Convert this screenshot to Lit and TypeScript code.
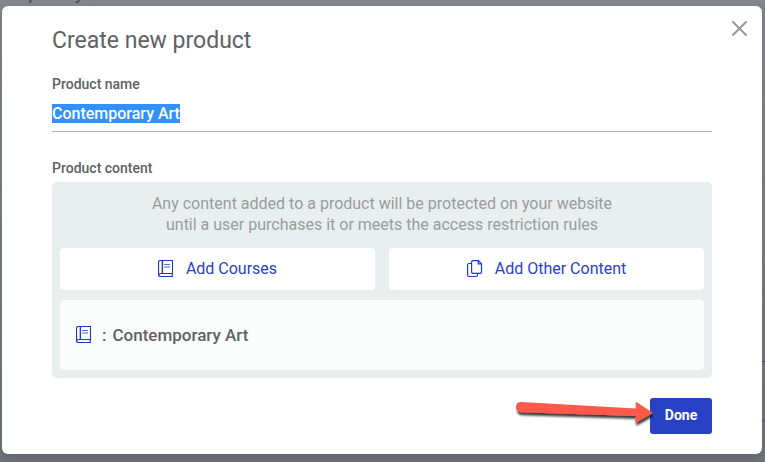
import { LitElement, html, css, svg } from "lit";
import { customElement, state, query } from "lit/decorators.js";

const bookIcon = html`<svg class="icon" width="16" height="18" viewBox="0 0 16 18" aria-hidden="true">
  <rect x="3" y="1" width="2" height="12" fill="#bcc5ee"></rect>
  <path d="M14.500 .5H2.500Q.5.5.5 2.500V14.500Q.5 16.500 2.500 16.500H14.500" fill="none" stroke="#1e3bc8" stroke-width="1.200"></path>
  <path d="M4.500 .7V13.500M.8 14.800Q1 13.500 2.600 13.500H14.500M14.500 .1V13.700L14 15L14.500 17" fill="none" stroke="#1e3bc8" stroke-width="1.100"></path>
  <path d="M6 4.500H12M6 7H12" stroke="#5066d4" stroke-width="1.200"></path>
</svg>`;

const copyIcon = html`<svg class="icon" width="16" height="18" viewBox="0 0 16 18" aria-hidden="true">
  <path d="M4.500 3.500H2Q.6 3.500.6 5V15Q.6 16.500 2 16.500H9Q10.500 16.500 10.500 15V13.600" fill="none" stroke="#1e3bc8" stroke-width="1.200"></path>
  <path d="M11.500 .6H6Q4.600.6 4.600 2V12Q4.600 13.400 6 13.400H13Q14.500 13.400 14.500 12V3.800Z" fill="#fff" stroke="#1e3bc8" stroke-width="1.200"></path>
  <path d="M11.300 .8V3.800H14.400" fill="none" stroke="#1e3bc8" stroke-width="1.200"></path>
</svg>`;

@customElement("app-root")
export class AppRoot extends LitElement {
  @state() private name = "Contemporary Art";
  @query(".field") private field!: HTMLInputElement;

  static styles = css`
    :host {
      display: block;
      position: relative;
      min-height: 100vh;
      box-sizing: border-box;
      overflow: hidden;
      padding: 6px 3px 8px 2px;
      background: linear-gradient(#858890, #7d8187 50%, #70747b);
      font-family: Roboto, "Liberation Sans", sans-serif;
      color: #5f6164;
    }
    * {
      box-sizing: border-box;
    }
    .backdrop {
      position: absolute;
      top: -20px;
      left: 28px;
      font-size: 20px;
      line-height: 24px;
      color: #464c5a;
    }
    .rules {
      position: absolute;
      right: 0;
      bottom: 41px;
      width: 3px;
      height: 60px;
      border: solid #454e80;
      border-width: 1px 0;
    }
    .dialog {
      position: relative;
      min-height: calc(100vh - 14px);
      padding: 20px 50px;
      background: #fff;
      border-radius: 6px;
      box-shadow: 0 4px 12px rgba(40, 44, 52, 0.25);
    }
    .title {
      margin: 0;
      font-size: 23px;
      line-height: 30px;
      font-weight: 400;
    }
    .close {
      position: absolute;
      top: 14px;
      right: 14px;
      display: flex;
      padding: 0;
      border: 0;
      background: none;
    }
    .label {
      display: block;
      margin: 0;
      font-size: 14px;
      line-height: 20px;
      font-weight: 500;
    }
    .name-label {
      margin-top: 18px;
    }
    .field {
      display: block;
      width: 100%;
      height: 38px;
      padding: 2px 0 0;
      border: 0;
      border-bottom: 1px solid #acb3ba;
      outline: 0;
      background: none;
      font: 500 16px Roboto, "Liberation Sans", sans-serif;
      color: #5f6164;
    }
    .field::selection {
      background: #3390ff;
      color: #fff;
    }
    .content-label {
      margin: 26px 0 4px;
    }
    .panel {
      padding: 8px;
      border-radius: 5px;
      background: #e9efee;
    }
    .hint {
      max-width: 480px;
      margin: 3px auto 13px;
      font-size: 16px;
      line-height: 21px;
      text-align: center;
      color: #999c9e;
    }
    .choices {
      display: grid;
      grid-template-columns: 1fr 1fr;
      gap: 14px;
    }
    .choice {
      display: flex;
      align-items: center;
      justify-content: center;
      gap: 12px;
      height: 42px;
      padding: 0;
      border: 0;
      border-radius: 4px;
      background: #fff;
      font: 400 16px Roboto, "Liberation Sans", sans-serif;
      color: #2a42c6;
    }
    .choice span {
      padding-bottom: 2px;
    }
    .icon {
      flex: none;
    }
    .items {
      margin: 10px 0 0;
      padding: 0;
      list-style: none;
    }
    .item {
      display: flex;
      align-items: center;
      gap: 10px;
      height: 70px;
      padding: 0 16px;
      border-radius: 4px;
      background: #fbfdfc;
      font-size: 17px;
      font-weight: 500;
    }
    .entry {
      display: flex;
      gap: 6px;
    }
    .footer {
      display: flex;
      justify-content: flex-end;
      margin-top: 20px;
    }
    .action {
      position: relative;
    }
    .done {
      display: block;
      width: 62px;
      height: 36px;
      padding: 0 0 2px;
      border: 0;
      border-radius: 3px;
      background: #2941c5;
      font: 700 14px Roboto, "Liberation Sans", sans-serif;
      color: #fff;
    }
    .arrow {
      position: absolute;
      top: -2px;
      right: 50px;
      pointer-events: none;
    }
  `;

  firstUpdated() {
    this.field.focus();
    this.field.select();
  }

  render() {
    return html`
      <div class="backdrop" aria-hidden="true">porary</div>
      <div class="rules"></div>
      <section class="dialog" role="dialog" aria-labelledby="title">
        <h1 class="title" id="title">Create new product</h1>
        <button class="close" aria-label="Close">
          <svg width="18" height="18" viewBox="0 0 18 18" aria-hidden="true">
            <path d="M3 2L16 15M16 2L3 15" stroke="#96999c" stroke-width="2" stroke-linecap="round"></path>
          </svg>
        </button>
        <label class="label name-label" for="name">Product name</label>
        <input
          class="field"
          id="name"
          type="text"
          spellcheck="false"
          .value=${this.name}
          @change=${(e: Event) => (this.name = (e.target as HTMLInputElement).value)}
        />
        <h2 class="label content-label">Product content</h2>
        <div class="panel">
          <p class="hint">
            Any content added to a product will be protected on your website<br />until a user
            purchases it or meets the access restriction rules
          </p>
          <div class="choices">
            <button class="choice">${bookIcon}<span>Add Courses</span></button>
            <button class="choice">${copyIcon}<span>Add Other Content</span></button>
          </div>
          <ul class="items">
            <li class="item">
              ${bookIcon}
              <span class="entry"><span>:</span><span>${this.name}</span></span>
            </li>
          </ul>
        </div>
        <div class="footer">
          <div class="action">
            <button class="done">Done</button>
            <svg class="arrow" width="150" height="36" viewBox="0 0 150 36" aria-hidden="true">
              <defs>
                <filter id="shade" x="-10%" y="-30%" width="120%" height="180%">
                  <feDropShadow dx="1" dy="3" stdDeviation="1.300" flood-color="#000" flood-opacity="0.75"></feDropShadow>
                </filter>
              </defs>
              ${svg`<path filter="url(#shade)" fill="#fd5a4c"
                d="M9 6L124 12.500L123.500 7Q124 5.500 126 7L141 17L125 26Q122 27 123 25L124 20L9 16.300Q4 16 4 11Q4 6 9 6Z"></path>`}
            </svg>
          </div>
        </div>
      </section>
    `;
  }
}
